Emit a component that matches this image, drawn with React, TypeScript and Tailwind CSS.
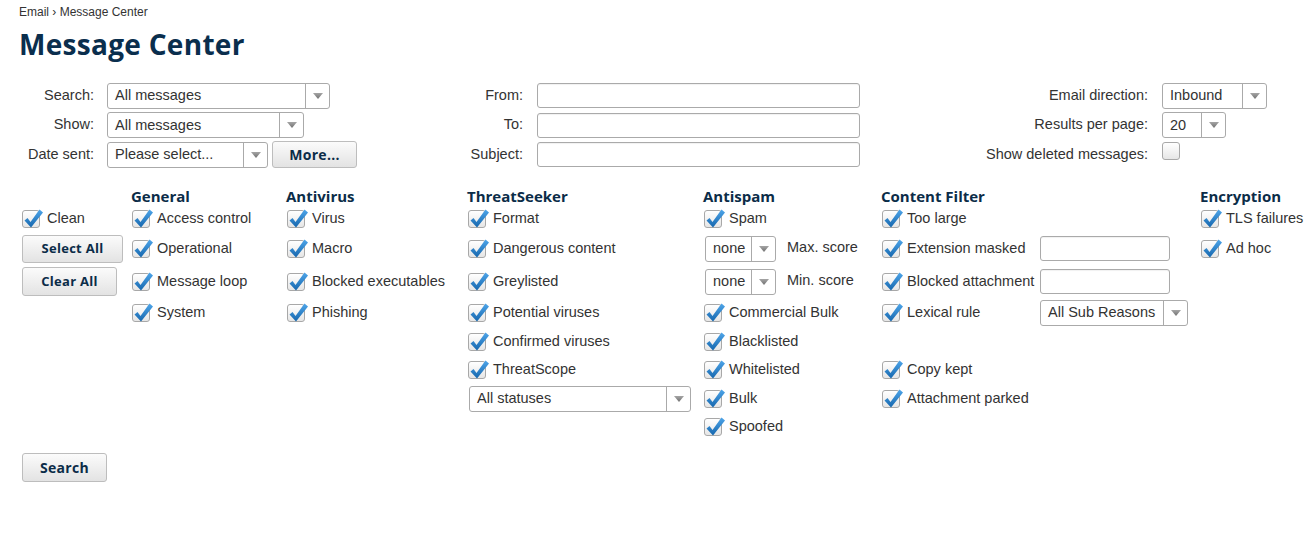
import type { ReactNode } from "react"

const BODY = "[font-family:'Liberation_Sans',Arial,sans-serif]"
const HEAD = "[font-family:'Open_Sans','Noto_Sans',sans-serif]"

function Check({ checked = true }: { checked?: boolean }) {
  return (
    <span className="relative inline-block w-[18px] h-[18px] shrink-0 rounded-[3px] border border-[#a8a8a8] bg-linear-to-b from-white to-[#e6e6e6]">
      {checked && (
        <svg className="absolute left-0 top-0 overflow-visible" width="18" height="18" viewBox="0 0 18 18">
          <defs>
            <linearGradient id="ck" x1="0" y1="0" x2="0" y2="1">
              <stop offset="0" stopColor="#4fa6ea" />
              <stop offset="1" stopColor="#1566ad" />
            </linearGradient>
          </defs>
          <path d="M1.5 9.5 L4.5 7 L7.5 11 L16.5 -1.5 L20 1.5 L8 16.5 Z" fill="url(#ck)" />
        </svg>
      )}
    </span>
  )
}

function Item({ label, checked = true }: { label: string; checked?: boolean }) {
  return (
    <label className="flex items-center gap-[7px] pl-px whitespace-nowrap">
      <Check checked={checked} />
      <span>{label}</span>
    </label>
  )
}

function Arrow() {
  return (
    <span className="w-[24px] shrink-0 border-l border-[#aaa] flex items-center justify-center">
      <svg width="10" height="6" viewBox="0 0 10 6">
        <defs>
          <linearGradient id="ar" x1="0" y1="0" x2="0" y2="1">
            <stop offset="0" stopColor="#a5a5a5" />
            <stop offset="1" stopColor="#707070" />
          </linearGradient>
        </defs>
        <path d="M0 0H10L5 6Z" fill="url(#ar)" />
      </svg>
    </span>
  )
}

function Select({ value, className }: { value: string; className: string }) {
  return (
    <div className={`flex shrink-0 rounded-[3px] border border-[#aaa] bg-white ${className}`}>
      <span className="flex-1 flex items-center pl-[7px] pt-px text-[14.5px] text-[#333] whitespace-nowrap overflow-hidden">{value}</span>
      <Arrow />
    </div>
  )
}

function TextInput({ className }: { className: string }) {
  return <div className={`rounded-[3px] border border-[#aaa] bg-white shadow-[inset_0_1px_1px_rgba(0,0,0,0.06)] ${className}`} />
}

function Btn({ children, className }: { children: ReactNode; className: string }) {
  return (
    <button
      className={`${HEAD} flex items-center justify-center rounded-[3px] border border-[#bdbdbd] bg-linear-to-b from-[#fbfbfb] to-[#e3e3e3] text-[13px] font-bold text-[#0b2c48] tracking-[0.3px] ${className}`}
    >
      {children}
    </button>
  )
}

const ROW_H = ["h-[24px]", "h-[36px]", "h-[30px]", "h-[32px]", "h-[26px]", "h-[30px]", "h-[28px]", "h-[28px]"]

function Column({ title, width, cells }: { title?: string; width: string; cells: (ReactNode | null)[] }) {
  return (
    <div className={`flex flex-col shrink-0 ${width}`}>
      <div className={`${HEAD} h-[20px] flex items-center text-[15px] font-bold text-[#0b2c48] whitespace-nowrap`}>{title}</div>
      {ROW_H.map((h, i) => (
        <div key={i} className={`${h} flex items-center`}>
          {cells[i] ?? null}
        </div>
      ))}
    </div>
  )
}

function FormRow({ label, labelW, children }: { label: string; labelW: string; children: ReactNode }) {
  return (
    <div className="h-[29.5px] flex items-center">
      <span className={`${labelW} shrink-0 text-right text-[14.5px] text-[#333] whitespace-nowrap`}>{label}</span>
      {children}
    </div>
  )
}

export default function App() {
  return (
    <div className={`${BODY} w-[1310px] h-[537px] bg-white text-[14.5px] text-[#333] overflow-hidden`}>
      <div className="pl-[19px] pt-[5px]">
        <div className="text-[12px] leading-[14px] text-[#333]">Email › Message Center</div>
        <h1 className={`${HEAD} mt-[8px] h-[34px] leading-[34px] text-[28px] font-bold text-[#0a2e4d] tracking-[0.3px]`}>Message Center</h1>
      </div>

      {/* filter form */}
      <div className="mt-[20px] flex">
        <div className="w-[360px] shrink-0 flex flex-col">
          <FormRow label="Search:" labelW="w-[94px]">
            <Select value="All messages" className="ml-[13px] w-[223px] h-[26px]" />
          </FormRow>
          <FormRow label="Show:" labelW="w-[94px]">
            <Select value="All messages" className="ml-[13px] w-[197px] h-[26px]" />
          </FormRow>
          <FormRow label="Date sent:" labelW="w-[94px]">
            <Select value="Please select..." className="ml-[13px] w-[161px] h-[26px]" />
            <Btn className="ml-[4px] w-[85px] h-[27px] text-[14px]">More...</Btn>
          </FormRow>
        </div>
        <div className="w-[500px] shrink-0 flex flex-col">
          <FormRow label="From:" labelW="w-[163px]">
            <TextInput className="ml-[14px] w-[323px] h-[25px]" />
          </FormRow>
          <FormRow label="To:" labelW="w-[163px]">
            <TextInput className="ml-[14px] w-[323px] h-[25px]" />
          </FormRow>
          <FormRow label="Subject:" labelW="w-[163px]">
            <TextInput className="ml-[14px] w-[323px] h-[25px]" />
          </FormRow>
        </div>
        <div className="flex-1 flex flex-col">
          <FormRow label="Email direction:" labelW="w-[288px]">
            <Select value="Inbound" className="ml-[14px] w-[105px] h-[26px]" />
          </FormRow>
          <FormRow label="Results per page:" labelW="w-[288px]">
            <Select value="20" className="ml-[14px] w-[64px] h-[26px]" />
          </FormRow>
          <FormRow label="Show deleted messages:" labelW="w-[288px]">
            <span className="ml-[14px]">
              <Check checked={false} />
            </span>
          </FormRow>
        </div>
      </div>

      {/* categories */}
      <div className="mt-[17px] pl-[21px] flex">
        <Column
          width="w-[110px]"
          cells={[
            <Item label="Clean" />,
            <Btn className="ml-px w-[101px] h-[28px]">Select All</Btn>,
            <Btn className="ml-px w-[95px] h-[29px]">Clear All</Btn>,
          ]}
        />
        <Column
          title="General"
          width="w-[155px]"
          cells={[
            <Item label="Access control" />,
            <Item label="Operational" />,
            <Item label="Message loop" />,
            <Item label="System" />,
          ]}
        />
        <Column
          title="Antivirus"
          width="w-[181px]"
          cells={[
            <Item label="Virus" />,
            <Item label="Macro" />,
            <Item label="Blocked executables" />,
            <Item label="Phishing" />,
          ]}
        />
        <Column
          title="ThreatSeeker"
          width="w-[236px]"
          cells={[
            <Item label="Format" />,
            <Item label="Dangerous content" />,
            <Item label="Greylisted" />,
            <Item label="Potential viruses" />,
            <Item label="Confirmed viruses" />,
            <Item label="ThreatScope" />,
            <Select value="All statuses" className="ml-[2px] w-[222px] h-[26px]" />,
          ]}
        />
        <Column
          title="Antispam"
          width="w-[178px]"
          cells={[
            <Item label="Spam" />,
            <div className="flex items-center">
              <Select value="none" className="ml-[2px] w-[71px] h-[26px]" />
              <span className="ml-[11px] -mt-[2px]">Max. score</span>
            </div>,
            <div className="flex items-center">
              <Select value="none" className="ml-[2px] w-[71px] h-[26px]" />
              <span className="ml-[11px] -mt-[2px]">Min. score</span>
            </div>,
            <Item label="Commercial Bulk" />,
            <Item label="Blacklisted" />,
            <Item label="Whitelisted" />,
            <Item label="Bulk" />,
            <Item label="Spoofed" />,
          ]}
        />
        <Column
          title="Content Filter"
          width="w-[319px]"
          cells={[
            <Item label="Too large" />,
            <div className="flex items-center">
              <div className="w-[159px] shrink-0"><Item label="Extension masked" /></div>
              <TextInput className="w-[130px] h-[25px]" />
            </div>,
            <div className="flex items-center">
              <div className="w-[159px] shrink-0"><Item label="Blocked attachment" /></div>
              <TextInput className="w-[130px] h-[25px]" />
            </div>,
            <div className="flex items-center">
              <div className="w-[159px] shrink-0"><Item label="Lexical rule" /></div>
              <Select value="All Sub Reasons" className="w-[148px] h-[26px]" />
            </div>,
            null,
            <Item label="Copy kept" />,
            <Item label="Attachment parked" />,
          ]}
        />
        <Column
          title="Encryption"
          width="w-[110px]"
          cells={[<Item label="TLS failures" />, <Item label="Ad hoc" />]}
        />
      </div>

      <Btn className="ml-[22px] mt-[12px] w-[85px] h-[29px] text-[14px]">Search</Btn>
    </div>
  )
}
